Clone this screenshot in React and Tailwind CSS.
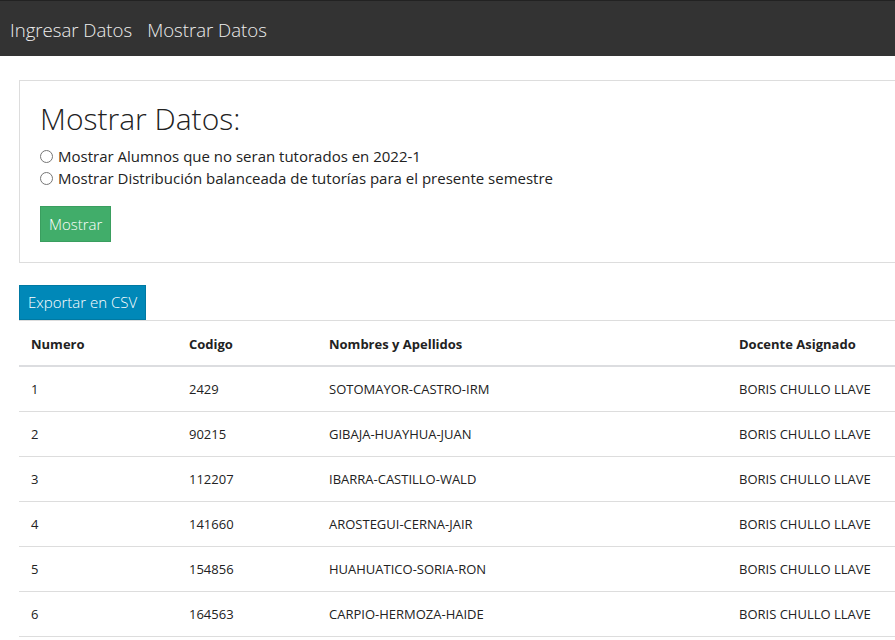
import { useState } from "react";

const rows = [
  { n: 1, code: "2429", name: "SOTOMAYOR-CASTRO-IRM", docente: "BORIS CHULLO LLAVE" },
  { n: 2, code: "90215", name: "GIBAJA-HUAYHUA-JUAN", docente: "BORIS CHULLO LLAVE" },
  { n: 3, code: "112207", name: "IBARRA-CASTILLO-WALD", docente: "BORIS CHULLO LLAVE" },
  { n: 4, code: "141660", name: "AROSTEGUI-CERNA-JAIR", docente: "BORIS CHULLO LLAVE" },
  { n: 5, code: "154856", name: "HUAHUATICO-SORIA-RON", docente: "BORIS CHULLO LLAVE" },
  { n: 6, code: "164563", name: "CARPIO-HERMOZA-HAIDE", docente: "BORIS CHULLO LLAVE" },
];

const cols = "grid grid-cols-[158px_140px_410px_260px]";

export default function App() {
  const [opcion, setOpcion] = useState(null);

  return (
    <div className="min-h-screen bg-white overflow-x-hidden text-[#222] font-['Open_Sans',sans-serif]">
      {/* Navbar */}
      <nav className="h-14 bg-[#333] border-t border-[#222] flex items-center pl-[10px] pt-[2px] gap-[15px]">
        <a href="#" className="text-[18.6px] font-light text-[#eee]">Ingresar Datos</a>
        <a href="#" className="text-[18.6px] font-light text-[#eee]">Mostrar Datos</a>
      </nav>

      <div className="pl-[19px]">
        {/* Panel */}
        <div className="mt-6 w-[1000px] border border-[#ddd] bg-white pl-5 pt-[21px] pb-5">
          <h2 className="text-[30px] font-light leading-[33px] mb-[10px]">Mostrar Datos:</h2>
          <label className="flex items-center h-[22px] text-[15px]">
            <input
              type="radio"
              name="opcion"
              checked={opcion === 1}
              onChange={() => setOpcion(1)}
              className="m-0 mr-[5px] w-[13px] h-[13px]"
            />
            Mostrar Alumnos que no seran tutorados en 2022-1
          </label>
          <label className="flex items-center h-[22px] text-[15px]">
            <input
              type="radio"
              name="opcion"
              checked={opcion === 2}
              onChange={() => setOpcion(2)}
              className="m-0 mr-[5px] w-[13px] h-[13px]"
            />
            Mostrar Distribución balanceada de tutorías para el presente semestre
          </label>
          <button
            type="button"
            className="mt-[17px] h-9 px-2 bg-[#41ad6a] border border-[#3a9e5f] text-white text-[15px] font-light"
          >
            Mostrar
          </button>
        </div>

        {/* Export */}
        <button
          type="button"
          className="mt-[22px] h-[35px] px-2 bg-[#0088b8] border border-[#0079a3] text-white text-[15px] font-light"
        >
          Exportar en CSV
        </button>

        {/* Table */}
        <div className="w-[1000px] text-[13px]">
          <div className={`${cols} h-[47px] items-center pt-[3px] border-t border-[#ddd] border-b-2 border-b-[#dcdde0] font-bold`}>
            <div className="pl-3">Numero</div>
            <div className="pl-3">Codigo</div>
            <div className="pl-3">Nombres y Apellidos</div>
            <div className="pl-3">Docente Asignado</div>
          </div>
          {rows.map((r) => (
            <div key={r.n} className={`${cols} h-[45px] items-center pt-[2px] border-b border-[#ddd]`}>
              <div className="pl-3">{r.n}</div>
              <div className="pl-3">{r.code}</div>
              <div className="pl-3">{r.name}</div>
              <div className="pl-3">{r.docente}</div>
            </div>
          ))}
        </div>
      </div>
    </div>
  );
}
